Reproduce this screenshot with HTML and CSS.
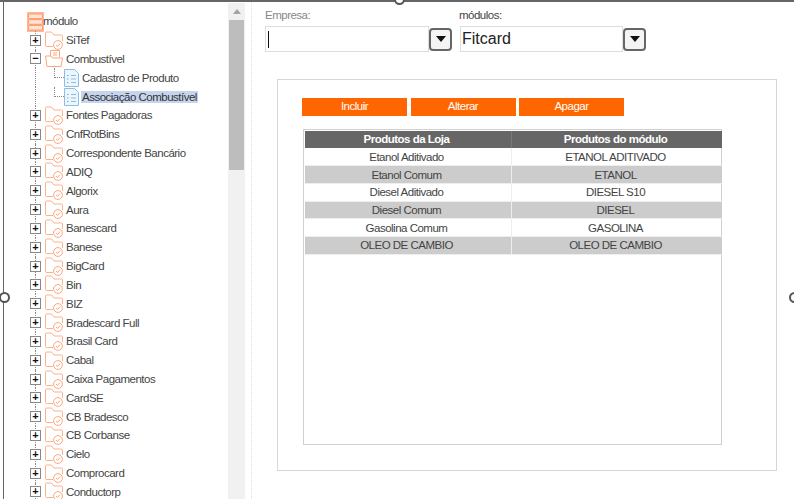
FILE: index.html
```html
<!DOCTYPE html>
<html lang="en">
<head>
  <meta charset="UTF-8" />
  <title>módulos</title>
  <link rel="stylesheet" href="styles.css">
</head>
<body>
  <svg class="defs" width="0" height="0">
    <symbol id="root" viewBox="0 0 17 20">
      <rect width="17" height="20" fill="#ffb795"/>
      <g fill="#ffe3d5" stroke="#ff9a6c" stroke-width="1">
        <rect x="1.500" y="2" width="14" height="4.600" rx="1"/>
        <rect x="1.500" y="7.700" width="14" height="4.600" rx="1"/>
        <rect x="1.500" y="13.400" width="14" height="4.600" rx="1"/>
      </g>
    </symbol>
    <symbol id="folder" viewBox="0 0 18 19">
      <path d="M8 15.500H1.500a1 1 0 0 1-1-1V2a1 1 0 0 1 1-1h5l2.500 3h7.500a1 1 0 0 1 1 1v5" fill="none" stroke="#ffb08c"/>
      <circle cx="13" cy="14" r="4.400" fill="#fff" stroke="#ffa67c"/>
      <path d="M11 14l1.500 1.500 2.600-3" fill="none" stroke="#ffa67c"/>
    </symbol>
    <symbol id="folder-open" viewBox="0 0 18 19">
      <path d="M5.500 8V1.500h9V8" fill="#fff" stroke="#ffa67c"/>
      <path d="M8 4h4M8 6h4" stroke="#ffa67c"/>
      <path d="M.5 7h5.500l1.500 2h10l-1.500 8.500H2z" fill="#fff" stroke="#ffa67c" stroke-linejoin="round"/>
    </symbol>
    <symbol id="doc" viewBox="0 0 15 18">
      <path d="M.5.5h10l4 4v13H.5z" fill="#eef6fd" stroke="#8dbde6"/>
      <path d="M3 6.500h1.500M3 10h1.500M3 13.500h1.500" stroke="#6fa8d8"/>
      <path d="M7 6.500h5M7 10h5M7 13.500h5" stroke="#8dbde6"/>
    </symbol>
  </svg>

  <div class="handle handle-top"></div>
  <div class="handle handle-left"></div>
  <div class="handle handle-right"></div>

  <div class="page">
    <div class="tree">
      <div class="root-row">
        <svg class="root-icon"><use href="#root"/></svg>
        <span>módulo</span>
      </div>
      <div class="node"><span class="box">+</span><svg class="folder"><use href="#folder"/></svg><span class="label">SiTef</span></div>
      <div class="node"><span class="box">−</span><svg class="folder"><use href="#folder-open"/></svg><span class="label">Combustível</span></div>
      <div class="node leaf"><svg class="doc"><use href="#doc"/></svg><span class="label">Cadastro de Produto</span></div>
      <div class="node leaf"><svg class="doc"><use href="#doc"/></svg><span class="label selected">Associação Combustível</span></div>
      <div class="node"><span class="box">+</span><svg class="folder"><use href="#folder"/></svg><span class="label">Fontes Pagadoras</span></div>
      <div class="node"><span class="box">+</span><svg class="folder"><use href="#folder"/></svg><span class="label">CnfRotBins</span></div>
      <div class="node"><span class="box">+</span><svg class="folder"><use href="#folder"/></svg><span class="label">Correspondente Bancário</span></div>
      <div class="node"><span class="box">+</span><svg class="folder"><use href="#folder"/></svg><span class="label">ADIQ</span></div>
      <div class="node"><span class="box">+</span><svg class="folder"><use href="#folder"/></svg><span class="label">Algorix</span></div>
      <div class="node"><span class="box">+</span><svg class="folder"><use href="#folder"/></svg><span class="label">Aura</span></div>
      <div class="node"><span class="box">+</span><svg class="folder"><use href="#folder"/></svg><span class="label">Banescard</span></div>
      <div class="node"><span class="box">+</span><svg class="folder"><use href="#folder"/></svg><span class="label">Banese</span></div>
      <div class="node"><span class="box">+</span><svg class="folder"><use href="#folder"/></svg><span class="label">BigCard</span></div>
      <div class="node"><span class="box">+</span><svg class="folder"><use href="#folder"/></svg><span class="label">Bin</span></div>
      <div class="node"><span class="box">+</span><svg class="folder"><use href="#folder"/></svg><span class="label">BIZ</span></div>
      <div class="node"><span class="box">+</span><svg class="folder"><use href="#folder"/></svg><span class="label">Bradescard Full</span></div>
      <div class="node"><span class="box">+</span><svg class="folder"><use href="#folder"/></svg><span class="label">Brasil Card</span></div>
      <div class="node"><span class="box">+</span><svg class="folder"><use href="#folder"/></svg><span class="label">Cabal</span></div>
      <div class="node"><span class="box">+</span><svg class="folder"><use href="#folder"/></svg><span class="label">Caixa Pagamentos</span></div>
      <div class="node"><span class="box">+</span><svg class="folder"><use href="#folder"/></svg><span class="label">CardSE</span></div>
      <div class="node"><span class="box">+</span><svg class="folder"><use href="#folder"/></svg><span class="label">CB Bradesco</span></div>
      <div class="node"><span class="box">+</span><svg class="folder"><use href="#folder"/></svg><span class="label">CB Corbanse</span></div>
      <div class="node"><span class="box">+</span><svg class="folder"><use href="#folder"/></svg><span class="label">Cielo</span></div>
      <div class="node"><span class="box">+</span><svg class="folder"><use href="#folder"/></svg><span class="label">Comprocard</span></div>
      <div class="node"><span class="box">+</span><svg class="folder"><use href="#folder"/></svg><span class="label">Conductorp</span></div>
    </div>

    <div class="scrollbar">
      <div class="scroll-up"></div>
      <div class="scroll-thumb"></div>
    </div>

    <div class="content">
      <div class="filters">
        <div class="field">
          <label class="muted">Empresa:</label>
          <div class="combo">
            <div class="combo-input"><span class="caret"></span></div>
            <div class="combo-btn"><span class="arrow"></span></div>
          </div>
        </div>
        <div class="field">
          <label>módulos:</label>
          <div class="combo">
            <div class="combo-input">Fitcard</div>
            <div class="combo-btn"><span class="arrow"></span></div>
          </div>
        </div>
      </div>

      <div class="panel">
        <div class="actions">
          <button class="btn">Incluir</button>
          <button class="btn">Alterar</button>
          <button class="btn">Apagar</button>
        </div>
        <div class="grid-box">
          <table class="grid">
            <thead>
              <tr><th>Produtos da Loja</th><th>Produtos do módulo</th></tr>
            </thead>
            <tbody>
              <tr><td>Etanol Aditivado</td><td>ETANOL ADITIVADO</td></tr>
              <tr><td>Etanol Comum</td><td>ETANOL</td></tr>
              <tr><td>Diesel Aditivado</td><td>DIESEL S10</td></tr>
              <tr><td>Diesel Comum</td><td>DIESEL</td></tr>
              <tr><td>Gasolina Comum</td><td>GASOLINA</td></tr>
              <tr><td>OLEO DE CAMBIO</td><td>OLEO DE CAMBIO</td></tr>
            </tbody>
          </table>
        </div>
      </div>
    </div>
  </div>
</body>
</html>
```

FILE: styles.css
```css
html, body {
  margin: 0;
  height: 100%;
  overflow: hidden;
  background: #fff;
  font-family: "Liberation Sans", Arial, sans-serif;
  color: #444;
}
.defs {
  position: absolute;
}
.page {
  display: flex;
  height: 499px;
  box-sizing: border-box;
  border-top: 2px solid #666;
  overflow: hidden;
}

/* selection handles */
.handle {
  position: absolute;
  width: 7px;
  height: 7px;
  border: 2px solid #555;
  border-radius: 50%;
  background: #fff;
  z-index: 5;
}
.handle-top { left: 394px; top: -6px; }
.handle-left { left: -1px; top: 292px; }
.handle-right { left: 789px; top: 292px; }

/* tree */
.tree {
  width: 225px;
  margin-left: 3px;
  border-left: 1px solid #666;
  font-size: 11.5px;
  letter-spacing: -0.5px;
  overflow: hidden;
  flex-shrink: 0;
  padding-top: 9.700px;
  box-sizing: border-box;
}
.root-row {
  display: flex;
  align-items: center;
  height: 20px;
  margin-left: 23px;
  margin-bottom: -1px;
}
.root-icon {
  width: 17px;
  height: 20px;
  flex-shrink: 0;
}
.root-row span {
  margin: -2px 0 0 -1px;
}
.node {
  display: flex;
  align-items: center;
  height: 18.83px;
  margin-left: 26px;
  position: relative;
  white-space: nowrap;
}
.node::before {
  content: "";
  position: absolute;
  left: 5px;
  top: 0;
  bottom: 0;
  border-left: 1px dotted #888;
}
.box {
  width: 9px;
  height: 9px;
  line-height: 8px;
  letter-spacing: 0;
  border: 1px solid #888;
  background: #fff;
  color: #111;
  font-size: 11px;
  font-weight: bold;
  text-align: center;
  flex-shrink: 0;
  z-index: 1;
}
.folder {
  width: 18px;
  height: 19px;
  margin-left: 4px;
  flex-shrink: 0;
}
.label {
  margin-left: 2px;
  padding: 0 1px;
}
.leaf {
  padding-left: 34px;
}
.leaf::after {
  content: "";
  position: absolute;
  left: 24px;
  top: 0;
  width: 9px;
  height: 9px;
  border-left: 1px dotted #888;
  border-bottom: 1px dotted #888;
}
.doc {
  width: 15px;
  height: 18px;
  flex-shrink: 0;
}
.label.selected {
  background: #c5d5ee;
  color: #333;
}

/* scrollbar */
.scrollbar {
  width: 17px;
  flex-shrink: 0;
  background: #f1f1f1;
  margin-top: 1px;
}
.scroll-up {
  width: 0;
  height: 0;
  margin: 6px auto 6px;
  border-left: 4px solid transparent;
  border-right: 4px solid transparent;
  border-bottom: 5px solid #a3a3a3;
}
.scroll-thumb {
  width: 15px;
  height: 150px;
  margin-left: 1px;
  background: #bdbdbd;
}

/* right side */
.content {
  flex: 1;
  margin-left: 6px;
  border-left: 1px dotted #ddd;
  padding: 7px 0 0 13px;
}
.filters {
  display: flex;
  gap: 8px;
}
.field label {
  display: block;
  font-size: 11.5px;
  letter-spacing: -0.5px;
  height: 17px;
  color: #444;
}
.field:last-child label {
  margin-left: -1px;
}
.field label.muted {
  color: #888;
}
.combo {
  display: flex;
  align-items: center;
}
.combo-input {
  width: 164px;
  height: 26px;
  line-height: 24px;
  box-sizing: border-box;
  border: 1px solid #ddd;
  padding-left: 2px;
  font-size: 16px;
  color: #222;
}
.field:last-child .combo-input {
  width: 163px;
  padding-left: 1px;
}
.caret {
  display: inline-block;
  width: 1px;
  height: 17px;
  background: #111;
  vertical-align: middle;
}
.combo-btn {
  width: 23px;
  height: 23px;
  box-sizing: border-box;
  border: 2px solid #666;
  border-radius: 4px;
  background: #f4f4f4;
  display: flex;
  align-items: center;
  justify-content: center;
}
.arrow {
  width: 0;
  height: 0;
  border-left: 5px solid transparent;
  border-right: 5px solid transparent;
  border-top: 6px solid #111;
}
.panel {
  width: 500px;
  height: 392px;
  box-sizing: border-box;
  margin: 27px 0 0 12px;
  border: 1px solid #d6d6d6;
  padding: 18px 0 0 24px;
}
.actions {
  display: flex;
  gap: 3.5px;
}
.btn {
  width: 105px;
  height: 18px;
  padding: 0 0 3px;
  border: none;
  background: #ff6600;
  color: #fff;
  font: 11.5px "Liberation Sans", Arial, sans-serif;
  letter-spacing: -0.5px;
}
.grid-box {
  width: 419px;
  height: 316px;
  box-sizing: border-box;
  margin: 13px 0 0 1px;
  border: 1px solid #d0d0d0;
}
.grid {
  width: 417px;
  border-collapse: collapse;
  table-layout: fixed;
  font-size: 11.5px;
  letter-spacing: -0.5px;
  margin-top: 1px;
  margin-left: 1px;
}
.grid th {
  height: 16px;
  padding: 0 3px 1px 0;
  background: #666;
  color: #fff;
  font-weight: bold;
  border-right: 1px solid #7a7a7a;
}
.grid th:first-child {
  width: 203px;
}
.grid td {
  padding: 0 3px 0 0;
  text-align: center;
  border-bottom: 1px solid #eee;
  border-right: 1px solid #eee;
  box-sizing: border-box;
  height: 17.7px;
}
.grid th:last-child, .grid td:last-child {
  border-right: none;
}
.grid tbody tr:nth-child(even) td {
  background: #ccc;
}
```
